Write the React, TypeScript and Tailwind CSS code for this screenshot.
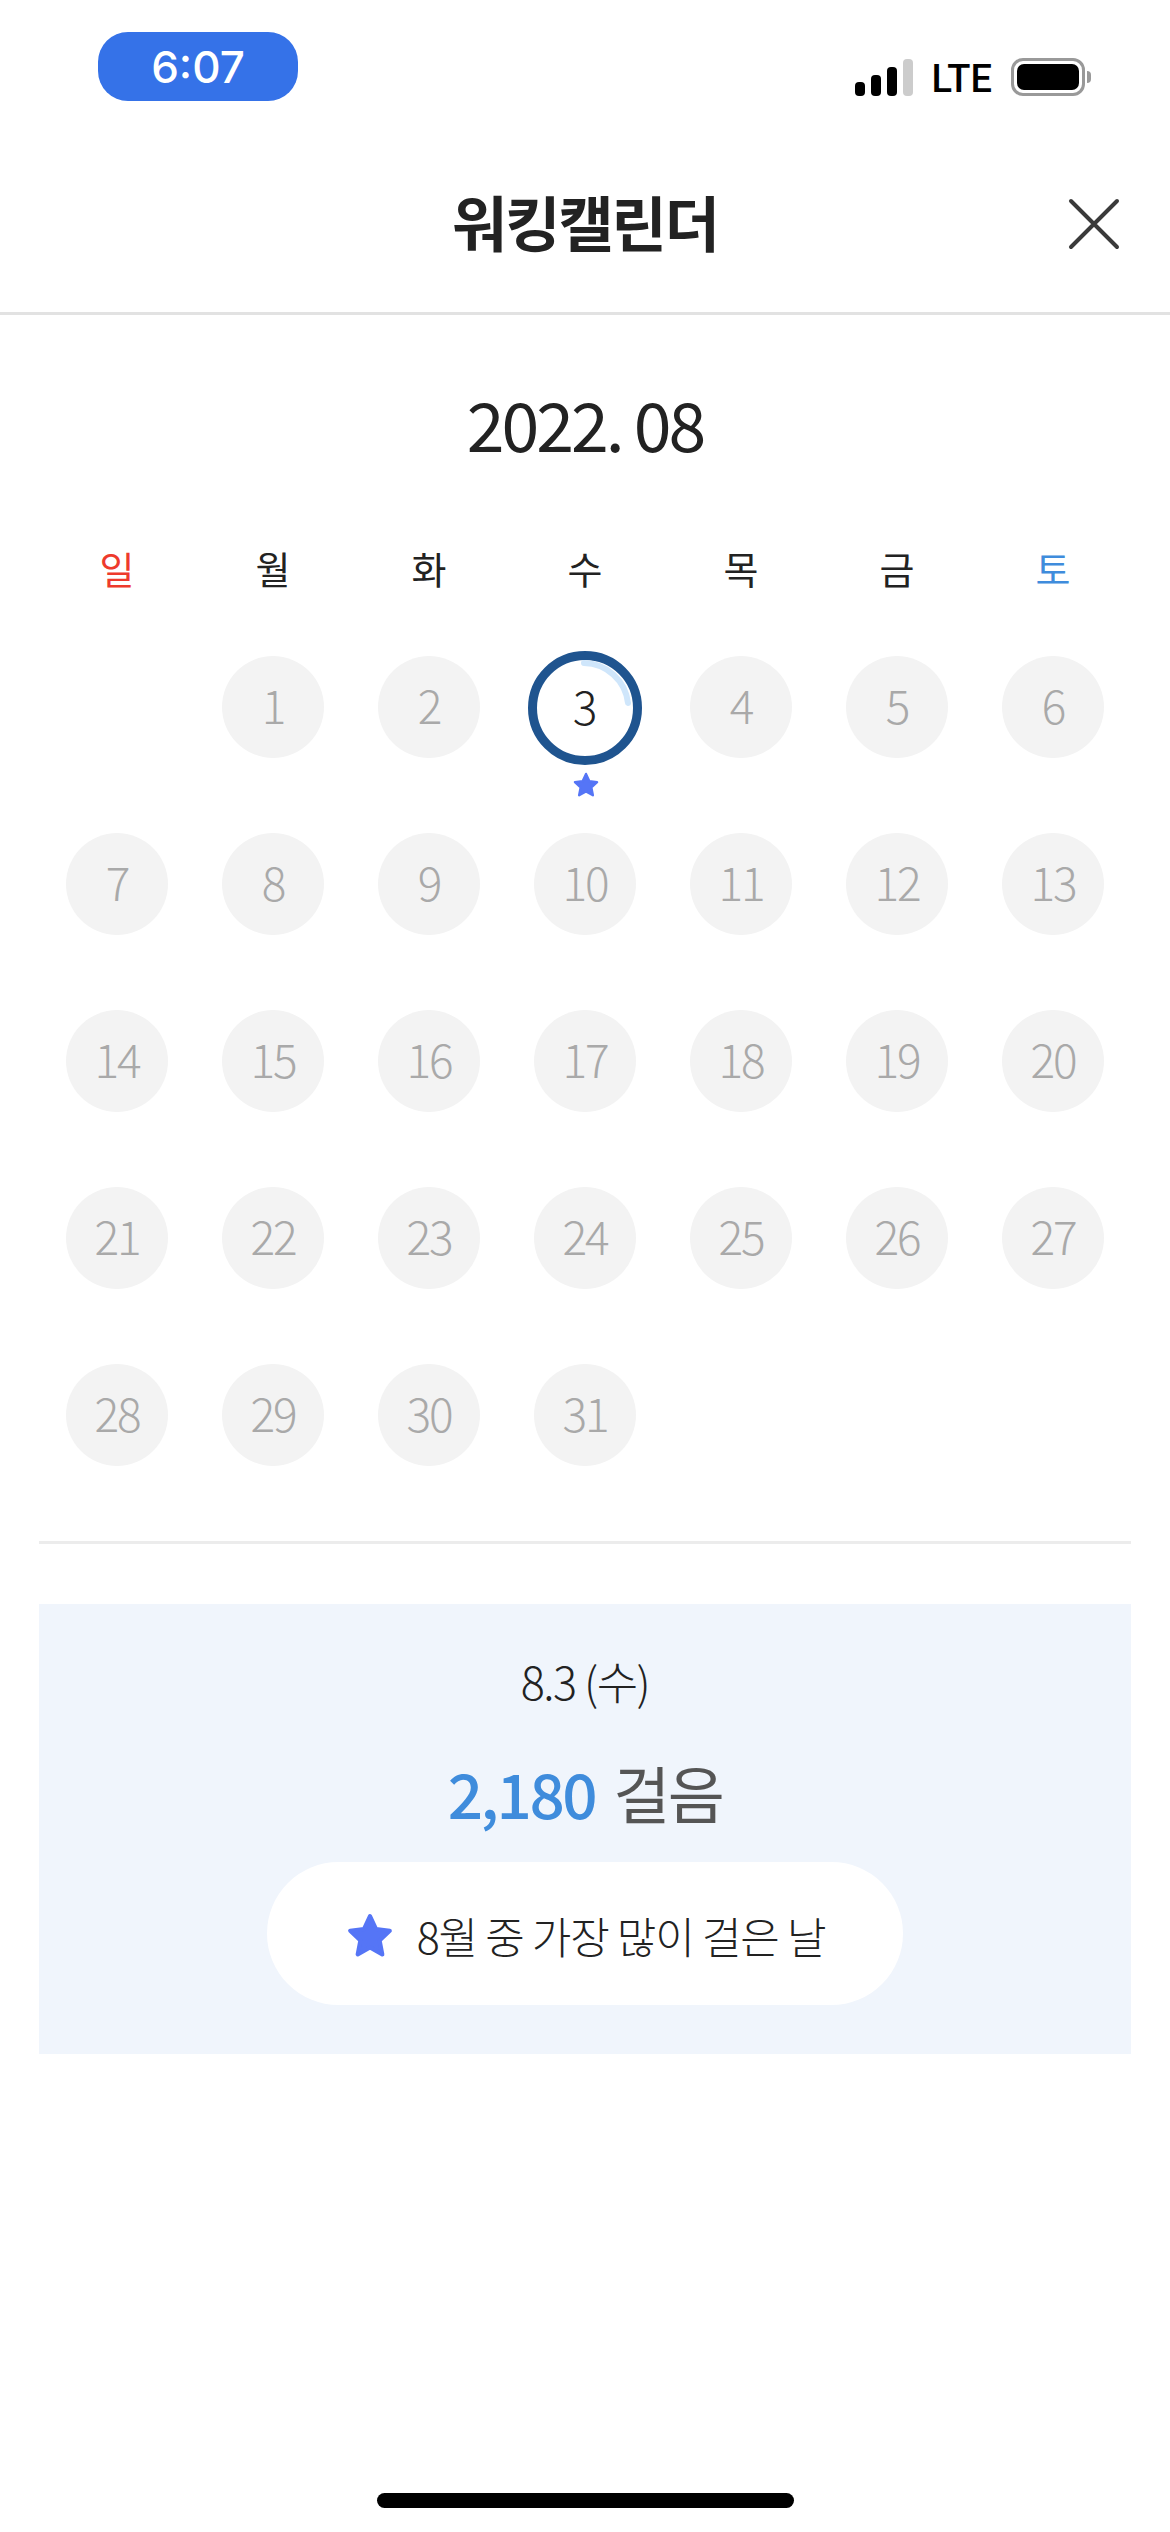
const KR = "font-['Noto_Sans_CJK_KR','Noto_Sans',sans-serif]";
const weekdays = [
  { t: '일', c: 'text-[#ee3a2c]' },
  { t: '월', c: 'text-[#222222]' },
  { t: '화', c: 'text-[#222222]' },
  { t: '수', c: 'text-[#222222]' },
  { t: '목', c: 'text-[#222222]' },
  { t: '금', c: 'text-[#222222]' },
  { t: '토', c: 'text-[#3f8cdc]' },
];
const days: (number | null)[] = [null, ...Array.from({ length: 31 }, (_, i) => i + 1)];

function Star({ className }: { className: string }) {
  return (
    <svg viewBox="0 0 24 24" className={className} fill="#5575f6" stroke="#5575f6" strokeWidth="2" strokeLinejoin="round">
      <path d="M12 2.500l2.900 6.200 6.600.8-4.900 4.600 1.300 6.700L12 17.500l-5.900 3.300 1.300-6.700L2.500 9.500l6.600-.8z" />
    </svg>
  );
}

function Cell({ d }: { d: number | null }) {
  if (d === null) return <div className="h-[177px]" />;
  if (d === 3) {
    return (
      <div className="relative h-[177px] flex justify-center">
        <div className="relative w-[114px] h-[114px] mt-[-5px] rounded-full border-[9px] border-[#1f548f] flex items-center justify-center text-[46px] font-light text-[#222222] pb-[5px]">
          <svg viewBox="0 0 96 96" className="absolute inset-0 w-[96px] h-[96px]" fill="none">
            <path d="M47 3 A45 45 0 0 1 91 43" stroke="#cfe6fb" strokeWidth="6" strokeLinecap="round" />
          </svg>
          <span className="relative">3</span>
        </div>
        <Star className="absolute left-[65px] top-[115px] w-[28px] h-[28px]" />
      </div>
    );
  }
  return (
    <div className="h-[177px] flex justify-center">
      <div className="w-[102px] h-[102px] rounded-full bg-[#f3f3f3] flex items-center justify-center text-[46px] font-light text-[#a9a9a9] tracking-[-2px] pb-[5px]">
        {d}
      </div>
    </div>
  );
}

export default function App() {
  return (
    <div className={`${KR} w-[1170px] h-[2532px] bg-white flex flex-col`}>
      <div className="h-[150px] flex items-start justify-between">
        <div className="ml-[98px] mt-[32px] w-[200px] h-[69px] rounded-[30px] bg-[#3572e8] flex items-center justify-center text-white text-[44px] leading-none font-['Inter',sans-serif] font-medium">
          6:07
        </div>
        <div className="mr-[79px] mt-[58px] flex items-center h-[38px]">
          <div className="flex items-end gap-[6px] h-[37px]">
            <div className="w-[10px] h-[14px] rounded-[4px] bg-black" />
            <div className="w-[10px] h-[21px] rounded-[4px] bg-black" />
            <div className="w-[10px] h-[29px] rounded-[4px] bg-black" />
            <div className="w-[10px] h-[37px] rounded-[4px] bg-[#cccccc]" />
          </div>
          <div className="ml-[18px] mt-[3px] text-[38px] leading-none font-['Roboto',sans-serif] font-medium text-black">LTE</div>
          <div className="ml-[19px] flex items-center">
            <div className="w-[74px] h-[38px] rounded-[12px] border-[3px] border-[#999999] p-[3px]">
              <div className="w-full h-full rounded-[7px] bg-black" />
            </div>
            <div className="ml-[2px] w-[4px] h-[12px] rounded-r-full bg-[#999999]" />
          </div>
        </div>
      </div>

      <div className="h-[165px] border-b-[3px] border-[#e2e2e2] relative flex items-center justify-center">
        <div className="text-[60px] leading-none font-bold text-[#222222] tracking-[-2px] mt-[-20px]">워킹캘린더</div>
        <svg viewBox="0 0 52 52" className="absolute right-[50px] top-[48px] w-[52px] h-[52px]" fill="none" stroke="#3a3a3a" strokeWidth="4" strokeLinecap="round">
          <path d="M3 3 L49 49 M49 3 L3 49" />
        </svg>
      </div>

      <div className="h-[228px] flex items-center justify-center text-[68px] leading-none text-[#222222] tracking-[-3px] pb-[12px]">2022. 08</div>

      <div className="px-[39px] grid grid-cols-7 h-[82px]">
        {weekdays.map((w) => (
          <div key={w.t} className={`text-center text-[38px] leading-[50px] font-normal ${w.c}`}>{w.t}</div>
        ))}
      </div>

      <div className="px-[39px] grid grid-cols-7 mt-[31px] h-[885px] auto-rows-[177px]">
        {days.map((d, i) => <Cell key={i} d={d} />)}
      </div>

      <div className="mx-[39px] h-[3px] bg-[#ececec]" />

      <div className="mx-[39px] mt-[60px] h-[450px] bg-[#f0f5fc] flex flex-col items-center">
        <div className="mt-[45px] h-[62px] flex items-center text-[45px] leading-none font-light text-[#222222] tracking-[-1.5px]">8.3 (수)</div>
        <div className="mt-[46px] h-[70px] flex items-center text-[62px] leading-none tracking-[-2.5px]">
          <span className="text-[#3f8cdc] font-medium">2,180</span>
          <span className="ml-[18px] text-[#555555] font-normal">걸음</span>
        </div>
        <div className="mt-[35px] w-[636px] h-[143px] rounded-full bg-white flex items-center justify-center pt-[4px]">
          <Star className="w-[50px] h-[50px] mr-[22px]" />
          <span className="text-[43px] leading-none font-light text-[#222222] tracking-[-1.2px]">8월 중 가장 많이 걸은 날</span>
        </div>
      </div>

      <div className="mt-auto mb-[24px] mx-auto w-[417px] h-[15px] rounded-full bg-black" />
    </div>
  );
}
